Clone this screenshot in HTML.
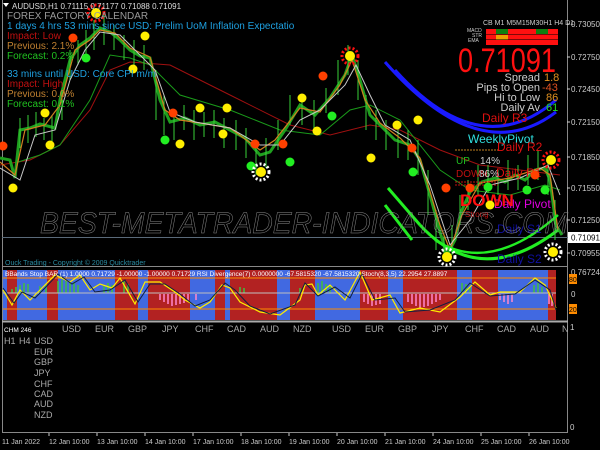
<!DOCTYPE html>
<html><head><meta charset="utf-8"><style>
html,body{margin:0;padding:0;background:#000;width:600px;height:450px;overflow:hidden}
svg{display:block}
text{font-family:"Liberation Sans",sans-serif}
</style></head><body>
<svg width="600" height="450" viewBox="0 0 600 450" xmlns="http://www.w3.org/2000/svg">
<rect width="600" height="450" fill="#000"/>
<line x1="2.5" y1="0" x2="2.5" y2="432" stroke="#888" />
<line x1="567.5" y1="0" x2="567.5" y2="432" stroke="#888"/>
<line x1="2" y1="266.5" x2="568" y2="266.5" stroke="#888"/>
<line x1="2" y1="321.5" x2="568" y2="321.5" stroke="#aaa" stroke-width="2"/>
<line x1="2" y1="432.5" x2="568" y2="432.5" stroke="#888"/>
<line x1="2" y1="237.5" x2="568" y2="237.5" stroke="#5a6a7a"/>

<polyline fill="none" stroke="#a01010" stroke-width="1" points="0,165 30,160 60,145 90,110 110,70 130,62 170,65 230,95 290,125 330,135 370,125 400,130 440,150 480,165 520,170 560,175"/>
<polyline fill="none" stroke="#1a9a1a" stroke-width="1" points="15,163 40,155 60,145 90,100 110,55 130,58 150,65 180,95 230,110 280,130 320,135 350,110 370,105 400,120 440,170 470,190 510,195 545,185 560,190"/>
<polyline fill="none" stroke="#1fa01f" stroke-width="3" points="0,158 10,160 15,178 20,130 30,128 40,124 55,128 60,100 70,60 80,45 90,38 100,28 110,32 120,40 130,50 140,56 150,58 160,100 170,122 185,118 200,125 215,122 230,130 245,138 260,155 270,152 285,130 300,105 315,115 330,98 345,75 352,55 360,80 370,115 380,125 395,140 410,145 420,160 430,195 440,232 447,255 455,240 462,210 470,192 482,182 495,178 505,182 515,175 525,180 535,170 545,168 550,180 556,225 562,235"/>
<g stroke="#38d038" stroke-width="1">
<path d="M20 118v30M28 115v28M36 112v25M44 118v22M52 115v28M62 90v30M70 50v30M78 40v25M86 30v25M94 20v30M104 15v30M114 25v25M124 35v25M134 40v30M144 45v25M156 70v50M164 95v40M174 110v30M184 105v25M194 110v30M204 112v25M214 110v28M224 118v30M236 120v30M246 128v30M256 140v35M266 138v30M278 120v30M290 95v30M302 95v30M314 100v30M326 88v25M338 60v35M348 45v30M358 60v40M366 95v35M376 110v30M386 120v30M398 128v30M408 130v30M418 140v35M428 170v45M436 210v40M444 235v25M452 225v30M460 195v30M468 180v30M478 165v30M488 165v28M498 170v25M508 160v30M518 165v25M528 155v30M538 150v30M548 160v35M555 200v40"/>
</g>
<polyline fill="none" stroke="#d08020" stroke-width="1.2" points="0,162 15,175 25,130 45,125 60,105 75,50 90,40 100,30 115,33 130,48 150,57 165,110 180,120 200,123 230,128 260,150 275,140 300,108 320,112 340,85 352,60 365,100 380,123 400,138 420,158 440,225 450,250 462,215 480,183 510,178 540,168 550,175 558,230"/>
<polyline fill="none" stroke="#c8c8c8" stroke-width="1" points="0,168 20,180 35,135 55,130 70,80 85,50 100,32 120,35 135,50 155,70 170,112 195,122 230,128 260,145 280,145 300,120 320,110 345,85 356,65 370,95 385,125 410,140 430,185 450,245 470,220 490,185 520,178 548,165 560,195"/>

<path d="M385 62 Q480 170 556 112" fill="none" stroke="#1a1aff" stroke-width="3"/>
<path d="M395 70 Q480 165 556 100" fill="none" stroke="#1a1aff" stroke-width="3"/>
<path d="M388 188 L420 225" fill="none" stroke="#22ee22" stroke-width="3"/>
<path d="M385 205 L412 240" fill="none" stroke="#22ee22" stroke-width="3"/>
<path d="M420 225 Q480 290 558 230" fill="none" stroke="#22ee22" stroke-width="3"/>
<path d="M435 240 Q490 275 558 215" fill="none" stroke="#22ee22" stroke-width="2.5"/>

<text x="468" y="143" font-size="12" fill="#30e0e0">WeeklyPivot</text>
<text x="497" y="151" font-size="12" fill="#e01010">Daily R2</text>
<text x="482" y="122" font-size="12" fill="#e01010">Daily R3</text>
<text x="496" y="177" font-size="12" fill="#e01010">Daily R1</text>
<text x="494" y="208" font-size="12" fill="#e000e0">Daily Pivot</text>
<text x="456" y="164" font-size="10" fill="#20c020">UP</text>
<text x="480" y="164" font-size="10" fill="#ccc">14%</text>
<text x="456" y="177" font-size="10" fill="#c01010">DOWN</text>
<text x="479" y="177" font-size="10" fill="#ccc">86%</text>
<line x1="455" y1="150" x2="498" y2="150" stroke="#c08020" stroke-dasharray="2,1"/>
<line x1="455" y1="182" x2="498" y2="182" stroke="#c01010" stroke-dasharray="2,1"/>
<line x1="455" y1="185" x2="498" y2="185" stroke="#c01010" stroke-dasharray="2,1"/>
<text x="460" y="206" font-size="17" font-weight="bold" fill="#ff1010">DOWN</text>
<text x="465" y="217" font-size="8" fill="#c01010">Strong</text>

<g>
<circle cx="73" cy="38" r="4.5" fill="#ff4000"/><circle cx="86" cy="58" r="4.5" fill="#22ee22"/><circle cx="145" cy="36" r="4.5" fill="#ffee00"/><circle cx="133" cy="69" r="4.5" fill="#ffee00"/>
<circle cx="45" cy="113" r="4.5" fill="#ffee00"/><circle cx="50" cy="145" r="4.5" fill="#ffee00"/><circle cx="3" cy="146" r="4.5" fill="#ff4000"/><circle cx="13" cy="188" r="4.5" fill="#ffee00"/>
<circle cx="173" cy="113" r="4.5" fill="#ff4000"/><circle cx="165" cy="140" r="4.5" fill="#22ee22"/><circle cx="180" cy="144" r="4.5" fill="#ffee00"/>
<circle cx="200" cy="108" r="4.5" fill="#ffee00"/><circle cx="227" cy="108" r="4.5" fill="#ffee00"/><circle cx="223" cy="134" r="4.5" fill="#ffee00"/>
<circle cx="255" cy="144" r="4.5" fill="#ff4000"/><circle cx="251" cy="166" r="4.5" fill="#22ee22"/>
<circle cx="283" cy="144" r="4.5" fill="#ff4000"/><circle cx="290" cy="162" r="4.5" fill="#22ee22"/>
<circle cx="302" cy="98" r="4.5" fill="#ffee00"/><circle cx="317" cy="131" r="4.5" fill="#ffee00"/><circle cx="323" cy="76" r="4.5" fill="#ff4000"/><circle cx="332" cy="116" r="4.5" fill="#22ee22"/>
<circle cx="371" cy="158" r="4.5" fill="#ffee00"/><circle cx="397" cy="125" r="4.5" fill="#ffee00"/><circle cx="412" cy="148" r="4.5" fill="#ff4000"/><circle cx="413" cy="172" r="4.5" fill="#22ee22"/>
<circle cx="418" cy="120" r="4.5" fill="#ffee00"/><circle cx="446" cy="188" r="4.5" fill="#ff4000"/><circle cx="470" cy="188" r="4.5" fill="#ff4000"/>
<circle cx="535" cy="175" r="4.5" fill="#ff4000"/><circle cx="527" cy="190" r="4.5" fill="#22ee22"/><circle cx="545" cy="190" r="4.5" fill="#22ee22"/><circle cx="488" cy="187" r="4.5" fill="#22ee22"/>
<circle cx="490" cy="205" r="4.5" fill="#ffee00"/>
</g>
<g><circle cx="350" cy="56" r="8" fill="none" stroke="#ff1010" stroke-width="3" stroke-dasharray="2,2"/><circle cx="350" cy="56" r="5" fill="#ffee00"/></g>
<g><circle cx="96" cy="13" r="8" fill="none" stroke="#ff1010" stroke-width="3" stroke-dasharray="2,2"/><circle cx="96" cy="13" r="5" fill="#ffee00"/></g>
<g><circle cx="551" cy="160" r="8" fill="none" stroke="#ff1010" stroke-width="3" stroke-dasharray="2,2"/><circle cx="551" cy="160" r="5" fill="#ffee00"/></g>
<g><circle cx="261" cy="172" r="8" fill="none" stroke="#fff" stroke-width="3" stroke-dasharray="2,2"/><circle cx="261" cy="172" r="5" fill="#ffee00"/></g>
<g><circle cx="447" cy="257" r="8" fill="none" stroke="#fff" stroke-width="3" stroke-dasharray="2,2"/><circle cx="447" cy="257" r="5" fill="#ffee00"/></g>
<g><circle cx="553" cy="252" r="8" fill="none" stroke="#fff" stroke-width="3" stroke-dasharray="2,2"/><circle cx="553" cy="252" r="5" fill="#ffee00"/></g>
<text x="497" y="233" font-size="12" fill="#1010a0">Daily S1</text>
<text x="497" y="263" font-size="12" fill="#1010a0">Daily S2</text>

<text x="40" y="233" font-size="30" font-style="italic" fill="none" stroke="#8a8a8a" stroke-width="0.5" textLength="528" lengthAdjust="spacingAndGlyphs">BEST-METATRADER-INDICATORS.COM</text>

<path d="M3 3 L9 3 L6 7Z" fill="#fff"/>
<text x="12" y="9" font-size="8" fill="#ddd">AUDUSD,H1  0.71115 0.71177 0.71088 0.71091</text>
<text x="7" y="19" font-size="10" fill="#999">FOREX FACTORY CALENDAR</text>
<text x="7" y="29" font-size="10" fill="#1ea0e0">1 days 4 hrs 53 mins since USD: Prelim UoM Inflation Expectatio</text>
<text x="7" y="39" font-size="10" fill="#c01010">Impact: Low</text>
<text x="7" y="49" font-size="10" fill="#c08030">Previous: 2.1%</text>
<text x="7" y="59" font-size="10" fill="#20c020">Forecast: 0.2%</text>
<text x="7" y="77" font-size="10" fill="#1ea0e0">33 mins until USD: Core CPI m/m</text>
<text x="7" y="87" font-size="10" fill="#c01010">Impact: High</text>
<text x="7" y="97" font-size="10" fill="#c08030">Previous: 0.0%</text>
<text x="7" y="107" font-size="10" fill="#20c020">Forecast: 0.1%</text>
<text x="5" y="265" font-size="7" fill="#2a8aa0">Ouck Trading - Copyright © 2009 Quicktrader</text>

<text x="483" y="25" font-size="7" fill="#ccc">CB M1 M5M15M30H1 H4 D1</text>
<text x="467" y="32" font-size="5" fill="#ccc">MACD</text><text x="472" y="37" font-size="5" fill="#ccc">STR</text><text x="468" y="42" font-size="5" fill="#ccc">EMA</text>
<rect x="486" y="29" width="72" height="16" fill="#ff1010"/>
<rect x="496" y="29" width="12" height="5" fill="#108010"/><rect x="536" y="29" width="12" height="5" fill="#108010"/>
<rect x="496" y="35" width="12" height="5" fill="#f0a000"/>
<line x1="486" y1="34.5" x2="558" y2="34.5" stroke="#000" stroke-width="0.6"/><line x1="486" y1="39.5" x2="558" y2="39.5" stroke="#000" stroke-width="0.6"/>
<text x="458" y="72" font-size="34" fill="#ff1010" textLength="98" lengthAdjust="spacingAndGlyphs">0.71091</text>
<g font-size="11" fill="#ccc" text-anchor="end">
<text x="540" y="81">Spread</text><text x="540" y="91">Pips to Open</text><text x="540" y="101">Hi to Low</text><text x="540" y="111">Daily Av</text>
</g>
<g font-size="11">
<text x="544" y="81" fill="#e09020">1.8</text><text x="542" y="91" fill="#e05020">-43</text><text x="546" y="101" fill="#e09020">86</text><text x="546" y="111" fill="#20e020">61</text>
</g>

<g font-size="8" fill="#ccc">
<text x="571" y="27">0.73050</text><text x="571" y="60">0.72750</text><text x="571" y="92">0.72450</text><text x="571" y="125">0.72150</text>
<text x="571" y="160">0.71850</text><text x="571" y="191">0.71550</text><text x="571" y="223">0.71250</text><text x="571" y="256">0.70955</text>
<text x="571" y="275">0.76724</text>
</g>
<g stroke="#ccc"><path d="M567 24h3M567 57h3M567 89h3M567 122h3M567 157h3M567 188h3M567 220h3M567 253h3"/></g>
<rect x="568" y="232" width="32" height="11" fill="#fff"/><text x="571" y="240.5" font-size="8" fill="#000">0.71091</text>

<g>
<rect x="3" y="270" width="553" height="50" fill="#4169e1"/>
<g fill="#b22222">
<rect x="7" y="270" width="10" height="50"/><rect x="47" y="270" width="11" height="50"/><rect x="115" y="270" width="23" height="50"/>
<rect x="148" y="270" width="42" height="50"/><rect x="215" y="270" width="10" height="50"/><rect x="230" y="270" width="47" height="50"/>
<rect x="290" y="270" width="25" height="50"/><rect x="360" y="270" width="28" height="50"/><rect x="403" y="270" width="54" height="50"/>
<rect x="472" y="270" width="26" height="50"/><rect x="548" y="270" width="8" height="50"/>
</g>
<g stroke="#40c040" stroke-width="1.5">
<path d="M12 293v-4M16 293v-6M20 293v-8M24 293v-10M28 293v-9M40 293v-7M46 293v-9M58 293v-12M62 293v-13M66 293v-12M70 293v-10M74 293v-11M78 293v-8M104 293v-7M108 293v-10M112 293v-8M124 293v-12M128 293v-9M240 293v-6M244 293v-5M300 293v-5M318 293v-10M322 293v-12M326 293v-9M330 293v-8M462 293v-10M466 293v-9M470 293v-6M534 293v-8M538 293v-10M542 293v-6"/>
</g>
<g stroke="#ff88cc" stroke-width="1.5">
<path d="M160 294v6M164 294v8M168 294v10M172 294v12M176 294v11M180 294v10M184 294v9M188 294v8M196 294v6M364 294v8M368 294v10M372 294v12M376 294v11M380 294v10M408 294v8M412 294v10M416 294v12M420 294v14M424 294v13M428 294v12M432 294v10M436 294v8M440 294v6M500 294v6M504 294v8M508 294v10M512 294v8M549 294v10M552 294v12"/>
</g>
<line x1="3" y1="278" x2="556" y2="278" stroke="#ff8c00"/>
<line x1="3" y1="293" x2="556" y2="293" stroke="#c0c0c0"/>
<line x1="3" y1="309" x2="556" y2="309" stroke="#ff8c00"/>
<polyline fill="none" stroke="#ffee00" stroke-width="1.2" points="3,290 12,305 20,290 30,300 40,290 55,275 70,282 80,275 90,290 100,284 112,288 120,278 135,304 145,282 160,282 175,292 185,300 200,308 210,302 222,285 230,288 240,302 260,312 280,315 300,300 305,285 312,284 318,295 330,285 345,300 360,272 372,300 390,295 400,313 420,308 440,312 460,297 475,282 490,295 500,292 520,292 535,278 545,285 556,308"/>
<polyline fill="none" stroke="#102040" stroke-width="1" points="3,288 14,303 22,292 35,298 45,288 58,274 72,284 84,277 95,292 110,290 125,280 138,302 150,284 165,284 180,294 195,306 210,300 225,283 235,290 250,306 270,314 295,305 305,283 318,296 335,287 350,298 362,274 375,300 395,298 405,312 430,310 455,300 470,283 490,296 515,294 535,280 550,290 556,310"/>
<text x="5" y="276" font-size="6.5" fill="#fff">BBands Stop BAR (1)   1.0000 0.71729 -1.00000 -1.00000 0.71729  RSI Divergence(7) 0.0000000 -67.5815320 -67.5815320  Stoch(8,3,5) 22.2954 27.8897</text>
</g>
<g font-size="8" fill="#ccc">
<rect x="569" y="274" width="8" height="10" fill="#ff8c00"/><text x="569" y="282" fill="#000" font-size="7">80</text>
<rect x="569" y="304" width="8" height="10" fill="#ff8c00"/><text x="569" y="312" fill="#000" font-size="7">20</text>
<text x="571" y="297">0</text>
</g>

<text x="4" y="332" font-size="6.5" fill="#fff">CHM 246</text>
<g font-size="9" fill="#aaa">
<text x="62" y="332">USD</text><text x="95" y="332">EUR</text><text x="128" y="332">GBP</text><text x="162" y="332">JPY</text><text x="195" y="332">CHF</text><text x="227" y="332">CAD</text><text x="260" y="332">AUD</text><text x="293" y="332">NZD</text>
<text x="332" y="332">USD</text><text x="365" y="332">EUR</text><text x="398" y="332">GBP</text><text x="432" y="332">JPY</text><text x="465" y="332">CHF</text><text x="497" y="332">CAD</text><text x="530" y="332">AUD</text><text x="562" y="332">N</text>
<text x="4" y="344">H1</text><text x="19" y="344">H4</text>
<text x="34" y="344">USD</text><text x="34" y="355">EUR</text><text x="34" y="365">GBP</text><text x="34" y="376">JPY</text><text x="34" y="387">CHF</text><text x="34" y="397">CAD</text><text x="34" y="407">AUD</text><text x="34" y="418">NZD</text>
</g>
<text x="570" y="330" font-size="8" fill="#ccc">1</text>
<text x="570" y="430" font-size="8" fill="#ccc">0</text>

<g font-size="7" fill="#ccc">
<text x="2" y="444">11 Jan 2022</text><text x="49" y="444">12 Jan 10:00</text><text x="97" y="444">13 Jan 10:00</text><text x="145" y="444">14 Jan 10:00</text><text x="193" y="444">17 Jan 10:00</text><text x="241" y="444">18 Jan 10:00</text><text x="289" y="444">19 Jan 10:00</text><text x="337" y="444">20 Jan 10:00</text><text x="385" y="444">21 Jan 10:00</text><text x="433" y="444">24 Jan 10:00</text><text x="481" y="444">25 Jan 10:00</text><text x="529" y="444">26 Jan 10:00</text>
</g>
<g stroke="#ccc"><path d="M49 433v3M97 433v3M145 433v3M193 433v3M241 433v3M289 433v3M337 433v3M385 433v3M433 433v3M481 433v3M529 433v3"/></g>
</svg>
</body></html>
